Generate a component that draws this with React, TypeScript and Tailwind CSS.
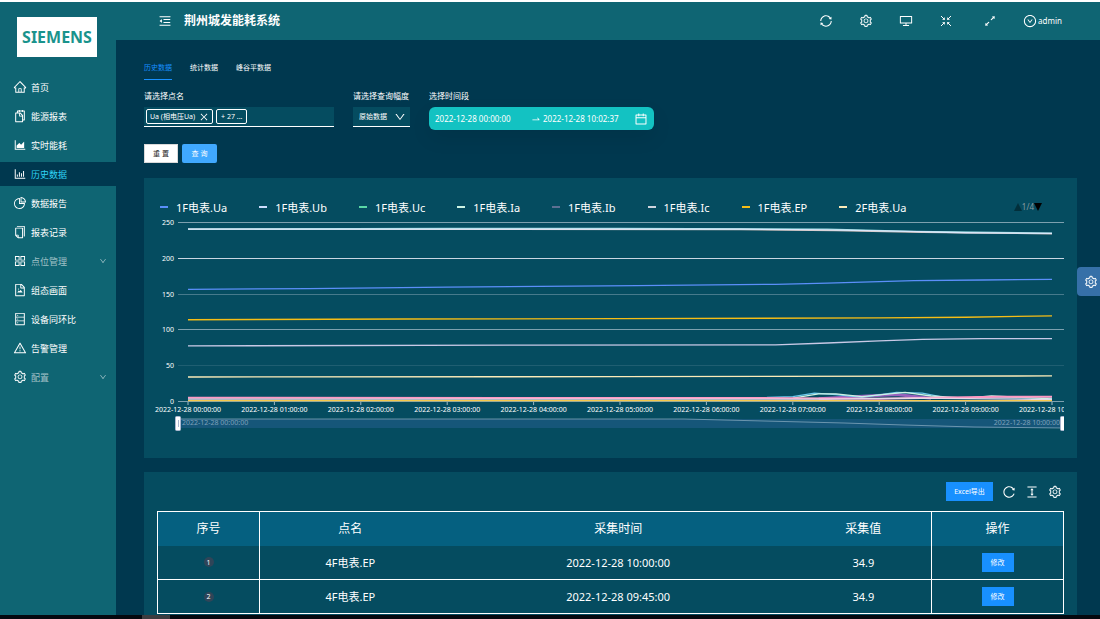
import React from 'react';
import {
  AiOutlineAppstore,
  AiOutlineAreaChart,
  AiOutlineArrowsAlt,
  AiOutlineBarChart,
  AiOutlineCalendar,
  AiOutlineClose,
  AiOutlineColumnHeight,
  AiOutlineCopy,
  AiOutlineDatabase,
  AiOutlineDesktop,
  AiOutlineDown,
  AiOutlineDownCircle,
  AiOutlineFileImage,
  AiOutlineHome,
  AiOutlineMenuFold,
  AiOutlinePieChart,
  AiOutlineReload,
  AiOutlineSetting,
  AiOutlineSnippets,
  AiOutlineSwapRight,
  AiOutlineSync,
  AiOutlineWarning,
} from 'react-icons/ai';

const menu = [
  { label: '首页', icon: AiOutlineHome },
  { label: '能源报表', icon: AiOutlineSnippets },
  { label: '实时能耗', icon: AiOutlineAreaChart },
  { label: '历史数据', icon: AiOutlineBarChart, active: true },
  { label: '数据报告', icon: AiOutlinePieChart },
  { label: '报表记录', icon: AiOutlineCopy },
  { label: '点位管理', icon: AiOutlineAppstore, group: true },
  { label: '组态画面', icon: AiOutlineFileImage },
  { label: '设备同环比', icon: AiOutlineDatabase },
  { label: '告警管理', icon: AiOutlineWarning },
  { label: '配置', icon: AiOutlineSetting, group: true },
];

const legend = [
  { name: '1F电表.Ua', color: 'bg-[#5b8ff9]' },
  { name: '1F电表.Ub', color: 'bg-[#cdddfd]' },
  { name: '1F电表.Uc', color: 'bg-[#5ad8a6]' },
  { name: '1F电表.Ia', color: 'bg-[#cdf3e4]' },
  { name: '1F电表.Ib', color: 'bg-[#5d7092]' },
  { name: '1F电表.Ic', color: 'bg-[#ced4de]' },
  { name: '1F电表.EP', color: 'bg-[#f6bd16]' },
  { name: '2F电表.Ua', color: 'bg-[#fcebb9]' },
];

// [hour, value] points
const series: { color: string; width?: number; points: number[][] }[] = [
  { color: '#d8c0b8', points: [[0, 240], [6.4, 239.5], [7.5, 238], [8.5, 235.5], [10, 233.5]] },
  { color: '#9adbe0', points: [[0, 240], [3, 241], [5, 241], [7.4, 240], [8.4, 237], [10, 234.5]] },
  { color: '#dbe7fb', points: [[0, 240], [6.4, 240], [7.4, 239], [8.3, 237], [9, 235], [10, 234]] },
  { color: '#5b8ff9', points: [[0, 156], [1.4, 157], [3, 159], [5.2, 161], [6.8, 163], [7.4, 164.5], [8.4, 168], [9.2, 169], [10, 170]] },
  { color: '#f6bd16', points: [[0, 113.5], [2.5, 114.5], [5, 115], [8, 116], [9, 117], [10, 119]] },
  { color: '#c9c9e6', points: [[0, 77], [4, 78], [6.8, 78.5], [7.4, 81], [8, 84], [8.5, 86], [9.2, 87], [10, 87]] },
  { color: '#fcebb9', points: [[0, 33.5], [5, 34], [10, 35]] },
  { color: '#9661bc', width: 3, points: [[7.3, 3], [7.7, 6], [8.2, 9], [8.6, 4]] },
  { color: '#6dc8ec', points: [[6.7, 5], [7, 6], [7.25, 11], [7.5, 9], [7.8, 5], [8.2, 12], [8.5, 11], [8.75, 5], [10, 4]] },
  { color: '#cdf3e4', points: [[7, 4], [7.3, 10], [7.5, 10], [7.8, 6], [8.3, 12], [8.6, 7], [9, 4], [9.3, 7], [10, 3]] },
  { color: '#ff99c3', width: 2, points: [[0, 4.5], [7, 4], [8, 3], [8.8, 5], [9.4, 6], [10, 6]] },
  { color: '#e6d9e8', points: [[0, 2.5], [7.4, 2.5], [8.4, 4], [10, 2]] },
  { color: '#f6c94a', points: [[0, 0.5], [10, 0.5]] },
];

const rows = [
  { id: 1, name: '4F电表.EP', time: '2022-12-28 10:00:00', value: '34.9' },
  { id: 2, name: '4F电表.EP', time: '2022-12-28 09:45:00', value: '34.9' },
];

const px = (hour: number) => 44 + hour * 86.4;
const py = (value: number) => 185 - value * 0.716;
const toPoints = (points: number[][]) => points.map(([h, v]) => `${px(h)},${py(v)}`).join(' ');

const CompressIcon: React.FC = () => (
  <svg viewBox="0 0 14 14" className="h-3.5 w-3.5" fill="none" stroke="currentColor">
    <path d="M2 2l3.5 3.5M12 2L8.5 5.5M2 12l3.5-3.5M12 12L8.5 8.5" />
    <path d="M5.5 3.5v2h-2M8.5 3.5v2h2M5.5 10.5v-2h-2M8.5 10.5v-2h2" strokeWidth="0.8" />
  </svg>
);

const Sidebar: React.FC = () => (
  <aside className="w-[116px] shrink-0 bg-[#0f6573] pt-[15px]">
    <div className="ml-[17px] flex h-10 w-20 items-center justify-center bg-white text-base leading-none font-bold text-[#1a938c]">
      SIEMENS
    </div>
    <nav className="mt-[18px] flex flex-col gap-[5px]">
      {menu.map(({ label, icon: Icon, active, group }) => (
        <a
          key={label}
          href="#"
          className={`flex h-6 items-center px-[13px] text-[9px] leading-none ${
            active ? 'bg-[#00384f] text-[#2fd3f5]' : group ? 'text-white/60' : 'text-white'
          }`}
        >
          <Icon className="mr-1 h-3.5 w-3.5 shrink-0 text-white" />
          {label}
          {group && <AiOutlineDown className="-mr-1 ml-auto h-2 w-2" />}
        </a>
      ))}
    </nav>
  </aside>
);

const Header: React.FC = () => (
  <header className="flex h-[38px] items-center bg-[#0f6573] pr-[38px] pl-[42px] text-white">
    <button aria-label="收起菜单">
      <AiOutlineMenuFold className="h-3.5 w-3.5" />
    </button>
    <h1 className="ml-3 text-xs leading-none font-bold">荆州城发能耗系统</h1>
    <div className="ml-auto flex items-center gap-[26px]">
      <button aria-label="刷新"><AiOutlineSync className="h-3.5 w-3.5" /></button>
      <button aria-label="设置"><AiOutlineSetting className="h-3.5 w-3.5" /></button>
      <button aria-label="大屏"><AiOutlineDesktop className="h-3.5 w-3.5" /></button>
      <button aria-label="缩小"><CompressIcon /></button>
      <button aria-label="全屏" className="ml-1"><AiOutlineArrowsAlt className="h-3.5 w-3.5" /></button>
      <button className="flex items-center gap-px text-[8px] leading-none">
        <AiOutlineDownCircle className="h-3.5 w-3.5" />
        admin
      </button>
    </div>
  </header>
);

const Filters: React.FC = () => (
  <form onSubmit={(e) => e.preventDefault()}>
    <div className="flex items-start text-white">
      <div className="w-[190px]">
        <label htmlFor="points" className="block h-[17px] text-[8px] leading-3">请选择点名</label>
        <div className="flex h-5 items-center gap-[3px] border-b border-white bg-[#054c60] px-0.5 text-[7px] leading-none">
          <span className="flex h-[15px] items-center gap-1 rounded-xs border border-white px-[3px] whitespace-nowrap">
            Ua (相电压Ua)
            <button type="button" aria-label="移除"><AiOutlineClose className="h-2.5 w-2.5" /></button>
          </span>
          <span className="flex h-[15px] items-center rounded-xs border border-white px-1 whitespace-nowrap">+ 27 ...</span>
          <input id="points" className="h-full w-full min-w-0 flex-1 bg-transparent outline-none" />
        </div>
      </div>
      <div className="ml-[19px] w-[57px]">
        <label htmlFor="mode" className="block h-[17px] text-[8px] leading-3 whitespace-nowrap">请选择查询幅度</label>
        <div className="relative">
          <select id="mode" className="block h-5 w-full appearance-none border-b border-white bg-[#054c60] pl-1.5 text-[7px] leading-none text-white">
            <option>原始数据</option>
          </select>
          <AiOutlineDown className="pointer-events-none absolute top-1 right-1 h-3 w-3" />
        </div>
      </div>
      <div className="ml-[19px] w-[225px]">
        <label htmlFor="start" className="block h-[17px] text-[8px] leading-3">选择时间段</label>
        <div className="flex h-[23px] items-center rounded-md bg-[#13c2c2] px-1.5 text-[8px] leading-none shadow-[0_8px_20px_rgba(0,0,0,0.08)]">
          <input id="start" className="w-24 bg-transparent outline-none" defaultValue="2022-12-28 00:00:00" />
          <AiOutlineSwapRight className="h-2.5 w-2.5 shrink-0" />
          <input aria-label="结束时间" className="ml-0.5 w-20 bg-transparent outline-none" defaultValue="2022-12-28 10:02:37" />
          <AiOutlineCalendar className="ml-auto h-3.5 w-3.5 shrink-0" />
        </div>
      </div>
    </div>
    <div className="mt-3.5 flex gap-1 text-[7px] leading-none">
      <button type="reset" className="h-[19px] w-[34px] border border-[#d9d9d9] bg-white text-[#262626]">重 置</button>
      <button type="submit" className="h-[19px] w-[35px] rounded-xs bg-[#40a9ff] text-white">查 询</button>
    </div>
  </form>
);

const TrendChart: React.FC = () => (
  <svg viewBox="0 0 933 242" className="block w-full" fontSize="7" fill="white">
    <defs>
      <clipPath id="plot">
        <rect x="0" y="0" width="920" height="242" />
      </clipPath>
    </defs>
    {[0, 50, 100, 150, 200, 250].map((v) => (
      <g key={v}>
        <line
          x1="34"
          x2="920"
          y1={Math.round(py(v)) + 0.5}
          y2={Math.round(py(v)) + 0.5}
          stroke="#e0e6f1"
          strokeOpacity={v === 200 ? 0.9 : v === 50 ? 0.12 : v === 150 ? 0.3 : 0.55}
        />
        <text x="30" y={py(v) + 3} textAnchor="end">{v}</text>
      </g>
    ))}
    {series.map((s, i) => (
      <polyline key={i} points={toPoints(s.points)} fill="none" stroke={s.color} strokeWidth={s.width ?? 1.3} />
    ))}
    <g clipPath="url(#plot)">
      {Array.from({ length: 11 }, (_, h) => (
        <g key={h}>
          <line x1={px(h)} x2={px(h)} y1="186" y2="189" stroke="#e0e6f1" strokeOpacity="0.7" />
          <text x={px(h)} y="196" textAnchor="middle">{`2022-12-28 ${String(h).padStart(2, '0')}:00:00`}</text>
        </g>
      ))}
      {/* data zoom */}
      <rect x="34" y="203" width="886" height="9" fill="#165679" />
      <polyline
        points="34,203 540,203 620,205 700,207 760,209 830,211 920,212"
        fill="none"
        stroke="#8fb0c4"
        strokeWidth="0.7"
      />
      <g fill="#7fa1ba">
        <text x="38" y="209">2022-12-28 00:00:00</text>
        <text x="916" y="209" textAnchor="end">2022-12-28 10:00:00</text>
      </g>
      <rect x="31.5" y="200.5" width="5" height="14" rx="1" fill="#fff" stroke="#acb8d1" />
      <path d="M34.5 204v7" stroke="#acb8d1" />
      <rect x="916.5" y="200.5" width="6" height="14" rx="1" fill="#fff" stroke="#acb8d1" />
    </g>
  </svg>
);

const ChartPanel: React.FC = () => (
  <section className="mt-[15px] bg-[#054c60] pt-[21px]">
    <div className="mb-px flex h-4 items-center gap-8 pr-[35px] pl-4 text-[11px] leading-none whitespace-nowrap text-white">
      {legend.map((item) => (
        <span key={item.name} className="flex items-center gap-2">
          <i className={`h-0.5 w-2 ${item.color}`} />
          {item.name}
        </span>
      ))}
      <span className="ml-auto flex items-center text-[8px] text-[#8a9a9f]">
        <svg viewBox="0 0 8 8" className="h-2 w-2"><path d="M4 0l4 8H0z" fill="#022f3b" /></svg>
        1/4
        <svg viewBox="0 0 8 8" className="h-2 w-2"><path d="M0 0h8L4 8z" fill="#000" /></svg>
      </span>
    </div>
    <TrendChart />
  </section>
);

const DataTable: React.FC = () => (
  <section className="mt-3.5 bg-[#054c60] px-[13px] pt-2.5 pb-4 text-white">
    <div className="flex items-center justify-end gap-[9px] pr-0.5">
      <button className="h-[19px] w-[47px] bg-[#1890ff] text-[7px] leading-none">Excel导出</button>
      <button aria-label="刷新表格"><AiOutlineReload className="h-3.5 w-3.5" /></button>
      <button aria-label="密度"><AiOutlineColumnHeight className="h-3.5 w-3.5" /></button>
      <button aria-label="列设置"><AiOutlineSetting className="h-3.5 w-3.5" /></button>
    </div>
    <table className="mt-2.5 w-full table-fixed border-collapse border border-white text-center text-[11px] leading-none">
      <thead className="bg-[#056080] text-xs leading-none">
        <tr className="h-[34px]">
          <th className="w-[102px] border-r border-white font-normal">序号</th>
          <th className="w-[20%] font-normal">点名</th>
          <th className="font-normal">采集时间</th>
          <th className="w-[15%] border-r border-white font-normal">采集值</th>
          <th className="w-[132px] font-normal">操作</th>
        </tr>
      </thead>
      <tbody>
        {rows.map((row) => (
          <tr key={row.id} className="h-[34px] border-b border-white">
            <td className="border-r border-white">
              <span className="mx-auto flex h-2.5 w-2.5 items-center justify-center rounded-full bg-[#2f4558] text-[7px]">{row.id}</span>
            </td>
            <td>{row.name}</td>
            <td>{row.time}</td>
            <td className="border-r border-white">{row.value}</td>
            <td>
              <button className="h-[19px] w-8 bg-[#1890ff] align-middle text-[7px] leading-none">修改</button>
            </td>
          </tr>
        ))}
      </tbody>
    </table>
  </section>
);

const App: React.FC = () => {
  return (
    <div className="relative flex h-screen flex-col overflow-hidden border-t-2 border-white bg-[#00384f] font-['Noto_Sans','Noto_Sans_CJK_SC',sans-serif]">
      <div className="flex min-h-0 flex-1">
        <Sidebar />
        <div className="min-w-0 flex-1 overflow-hidden">
          <Header />
          <main className="pt-5 pr-[23px] pl-7">
            <div role="tablist" className="mb-2.5 flex gap-[18px] text-[7px] leading-none text-white">
              <button role="tab" aria-selected="true" className="h-5 border-b border-[#1890ff] pb-1 text-[#1890ff]">历史数据</button>
              <button role="tab" aria-selected="false" className="h-5 border-b border-transparent pb-1">统计数据</button>
              <button role="tab" aria-selected="false" className="h-5 border-b border-transparent pb-1">峰谷平数据</button>
            </div>
            <Filters />
            <ChartPanel />
            <DataTable />
          </main>
        </div>
      </div>

      {/* bottom scroll bar */}
      <div className="h-1 shrink-0 bg-[#05080f] pl-[142px]">
        <div className="h-full w-7 bg-[#3c3c40]" />
      </div>

      <button
        aria-label="主题设置"
        className="absolute top-[265px] right-0 flex h-[29px] w-[23px] items-center justify-center rounded-l-sm bg-[#3670a8] pl-1 text-white"
      >
        <AiOutlineSetting className="h-3.5 w-3.5" />
      </button>
    </div>
  );
};

export default App;
